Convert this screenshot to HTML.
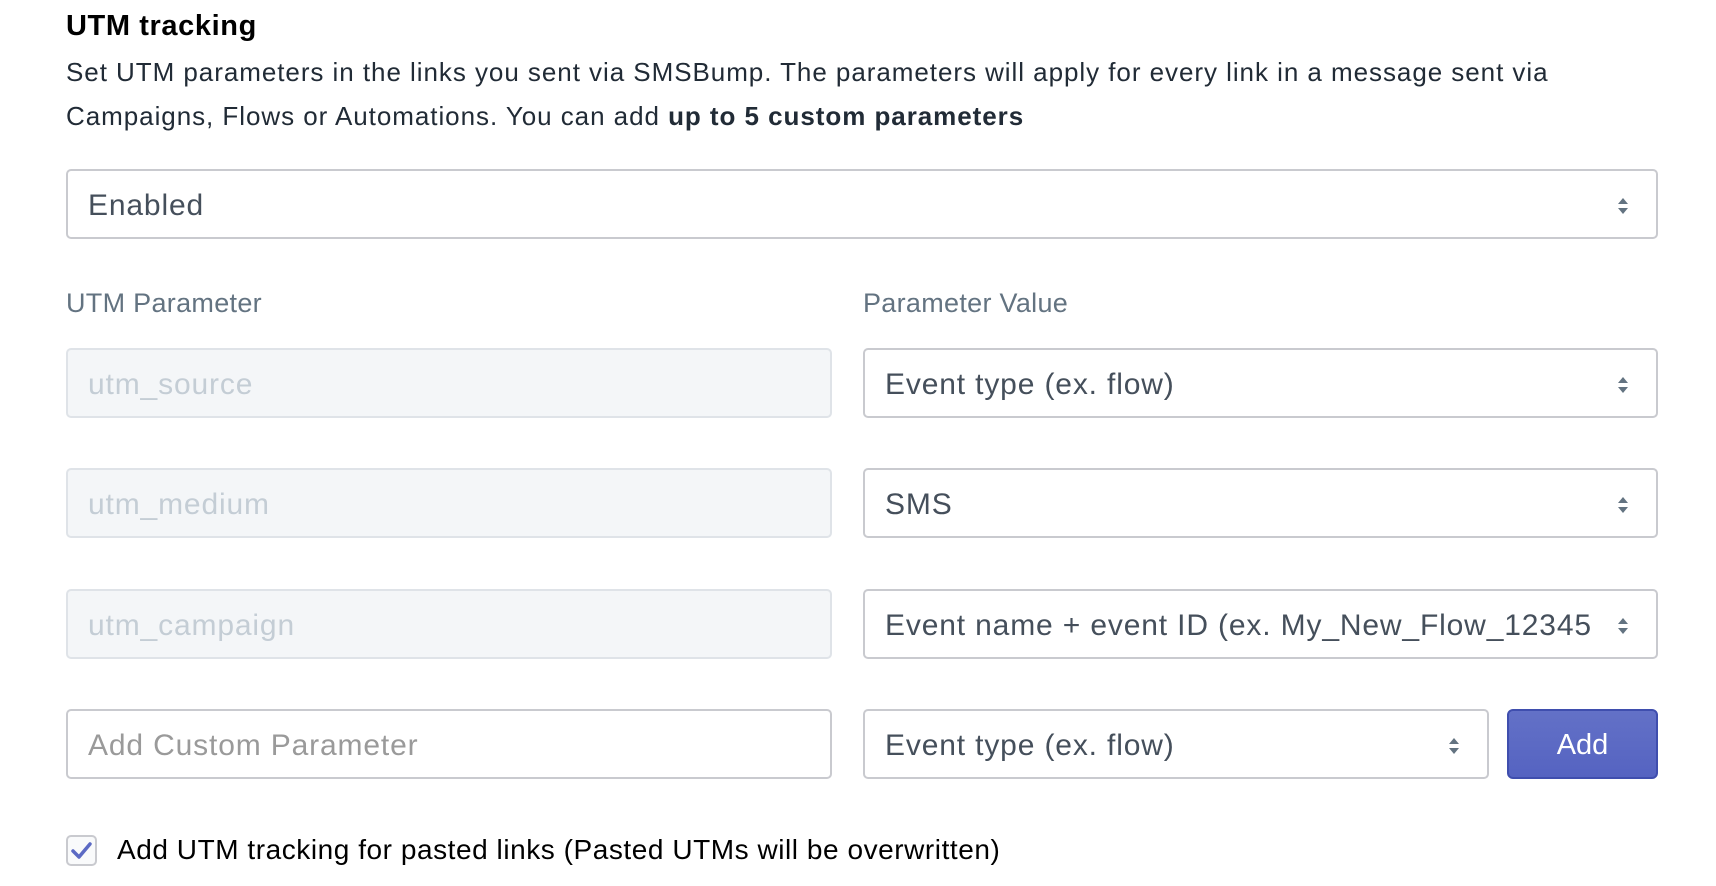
<!DOCTYPE html>
<html><head><meta charset="utf-8"><style>
*{box-sizing:border-box;margin:0;padding:0}
body{width:1716px;height:886px;background:#fff;font-family:"Liberation Sans",Arial,sans-serif;position:relative;overflow:hidden;color:#212b36}
.a{position:absolute}
h1{position:absolute;left:66px;top:10px;font-size:29px;font-weight:bold;color:#000;letter-spacing:0.6px}
p.d{position:absolute;left:66px;top:50px;font-size:26px;line-height:44px;color:#212b36;white-space:nowrap;letter-spacing:0.95px}
.box{position:absolute;height:70px;border:2px solid #c9cacf;border-radius:5px;background:#fff;font-size:30px;line-height:70px;padding-left:20px;color:#454f5b;white-space:nowrap;overflow:hidden;letter-spacing:0.85px}
.dis{background:#f4f6f8;border-color:#dfe3e8;color:#c4cdd5}
.ph{color:#9a9a9a}
.arr{position:absolute;right:26px;top:25px;width:14px;height:20px}
.lbl{position:absolute;top:288px;font-size:27px;color:#637381;letter-spacing:0.3px}
.btn{position:absolute;left:1507px;top:709px;width:151px;height:70px;border-radius:6px;background:linear-gradient(#6371c7,#5563c1);border:2px solid #3f4eae;color:#fff;font-size:29px;text-align:center;line-height:68px}
</style></head><body>
<h1>UTM tracking</h1>
<p class="d">Set UTM parameters in the links you sent via SMSBump. The parameters will apply for every link in a message sent via<br>Campaigns, Flows or Automations. You can add <b>up to 5 custom parameters</b></p>

<div class="box" style="left:66px;top:169px;width:1592px">Enabled<svg class="arr" viewBox="0 0 14 20"><path d="M7 2 L12 8 H2Z M7 18 L12 12 H2Z" fill="#637381"/></svg></div>

<div class="lbl" style="left:66px">UTM Parameter</div>
<div class="lbl" style="left:863px">Parameter Value</div>

<div class="box dis" style="left:66px;top:348px;width:766px">utm_source</div>
<div class="box" style="left:863px;top:348px;width:795px">Event type (ex. flow)<svg class="arr" viewBox="0 0 14 20"><path d="M7 2 L12 8 H2Z M7 18 L12 12 H2Z" fill="#637381"/></svg></div>

<div class="box dis" style="left:66px;top:468px;width:766px">utm_medium</div>
<div class="box" style="left:863px;top:468px;width:795px">SMS<svg class="arr" viewBox="0 0 14 20"><path d="M7 2 L12 8 H2Z M7 18 L12 12 H2Z" fill="#637381"/></svg></div>

<div class="box dis" style="left:66px;top:589px;width:766px">utm_campaign</div>
<div class="box" style="left:863px;top:589px;width:795px">Event name + event ID (ex. My_New_Flow_12345<svg class="arr" style="background:#fff;right:20px;width:26px;padding:0 6px;top:25px" viewBox="0 0 14 20"><path d="M7 2 L12 8 H2Z M7 18 L12 12 H2Z" fill="#637381"/></svg></div>

<div class="box ph" style="left:66px;top:709px;width:766px">Add Custom Parameter</div>
<div class="box" style="left:863px;top:709px;width:626px">Event type (ex. flow)<svg class="arr" viewBox="0 0 14 20"><path d="M7 2 L12 8 H2Z M7 18 L12 12 H2Z" fill="#637381"/></svg></div>
<div class="btn">Add</div>

<div class="a" style="left:66px;top:835px;width:31px;height:31px;border:2px solid #c9cacf;border-radius:5px;background:#f9fafb"><svg viewBox="0 0 27 27" width="27" height="27"><path d="M5 14 L11 20 L22 7" stroke="#5c6ac4" stroke-width="3.5" fill="none" stroke-linecap="round" stroke-linejoin="round"/></svg></div>
<div class="a" style="left:117px;top:834px;font-size:28px;color:#000;white-space:nowrap;letter-spacing:0.55px">Add UTM tracking for pasted links (Pasted UTMs will be overwritten)</div>
</body></html>
